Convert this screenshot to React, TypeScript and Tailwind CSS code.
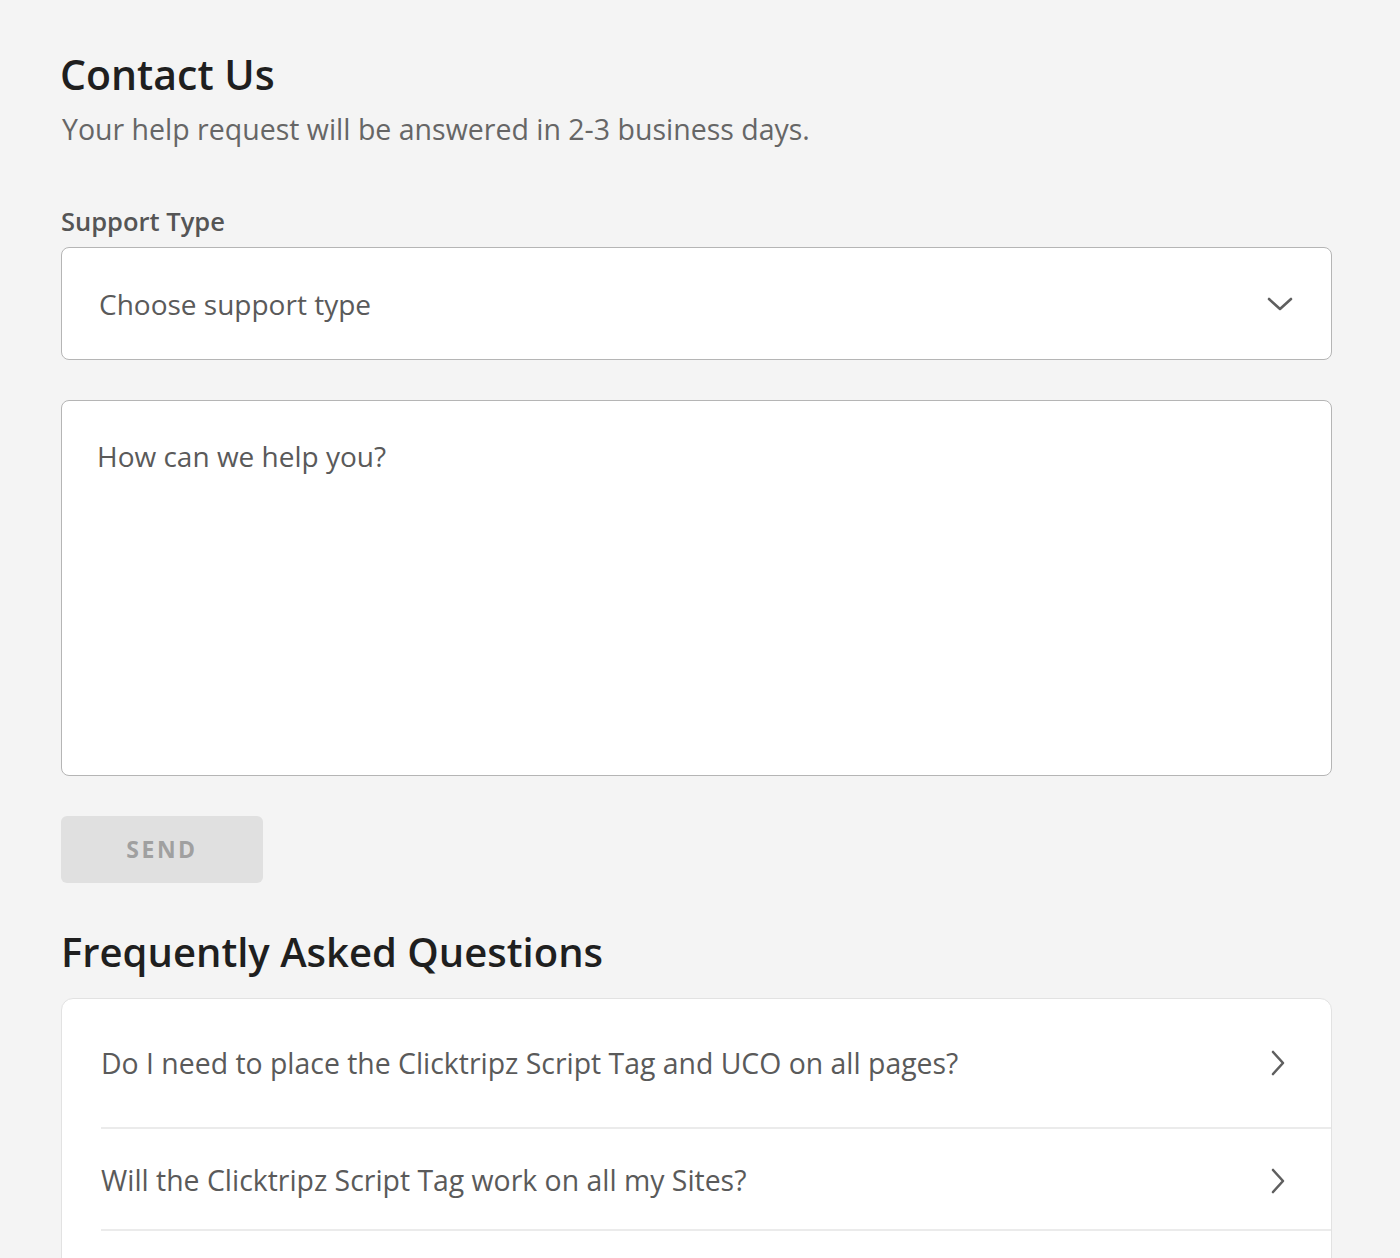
import React from "react";

function ChevronDown() {
  return (
    <svg width="26" height="16" viewBox="0 0 26 16" fill="none">
      <path d="M2 3 L13 13 L24 3" stroke="#5f5f5f" strokeWidth="2.6" strokeLinecap="round" strokeLinejoin="round" />
    </svg>
  );
}

function ChevronRight() {
  return (
    <svg width="16" height="26" viewBox="0 0 16 26" fill="none">
      <path d="M3 2 L13 13 L3 24" stroke="#5f5f5f" strokeWidth="2.6" strokeLinecap="round" strokeLinejoin="round" />
    </svg>
  );
}

export default function App() {
  const faqs = [
    "Do I need to place the Clicktripz Script Tag and UCO on all pages?",
    "Will the Clicktripz Script Tag work on all my Sites?",
  ];
  return (
    <div
      className="h-[1258px] overflow-hidden bg-[#f4f4f4] pl-[61px] pr-[68px] pt-[50px]"
      style={{ fontFamily: '"Open Sans", sans-serif' }}
    >
      <h1 className="text-[41px] leading-[48px] font-semibold text-[#1f1f1f] -ml-px">Contact Us</h1>
      <p className="mt-[13px] text-[28.5px] leading-[36px] text-[#666666] pl-px">
        Your help request will be answered in 2-3 business days.
      </p>
      <div className="mt-[58px] text-[25.5px] leading-[32px] font-semibold text-[#555555]">Support Type</div>
      <div className="mt-[10px] h-[113px] bg-white border border-[#b5b5b5] rounded-[8px] flex items-center justify-between pl-[37px] pr-[38px]">
        <span className="text-[28px] text-[#5a5a5a]">Choose support type</span>
        <ChevronDown />
      </div>
      <div className="mt-[40px] h-[376px] bg-white border border-[#b5b5b5] rounded-[8px] pl-[35px] pt-[34px]">
        <span className="text-[28px] text-[#5a5a5a]">How can we help you?</span>
      </div>
      <div className="mt-[40px] w-[202px] h-[67px] bg-[#e0e0e0] rounded-[6px] flex items-center justify-center">
        <span className="text-[23px] font-bold tracking-[2.5px] text-[#a0a0a0]">SEND</span>
      </div>
      <h2 className="mt-[45px] text-[40px] leading-[48px] font-semibold text-[#1f1f1f]">Frequently Asked Questions</h2>
      <div className="mt-[22px] bg-white border border-[#e2e2e2] rounded-[12px] pl-[39px]">
        {faqs.map((q, i) => (
          <div
            key={q}
            className={`${i === 0 ? "h-[130px]" : "h-[102px] pt-[3px]"} border-b-2 border-[#ebebeb] flex items-center justify-between pr-[45px]`}
          >
            <span className="text-[28.4px] text-[#5a5a5a]">{q}</span>
            <ChevronRight />
          </div>
        ))}
        <div className="h-[102px]" />
      </div>
    </div>
  );
}
